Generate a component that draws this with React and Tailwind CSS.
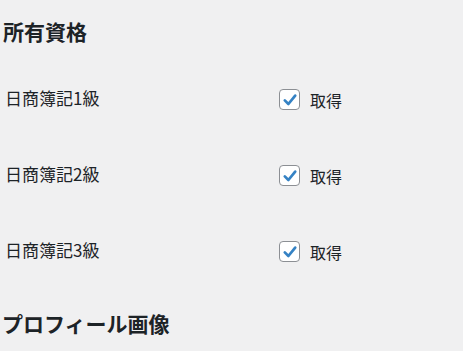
import React from "react";

const font = { fontFamily: '"Noto Sans CJK JP", "Noto Sans", sans-serif' };

function Check() {
  return (
    <span className="flex h-[21px] w-[21px] items-center justify-center rounded-[4px] border border-[#8c8f94] bg-white">
      <svg width="16" height="16" viewBox="0 0 20 20">
        <path d="M3.5 10.5 L8 15 L16.5 4.5" fill="none" stroke="#3582c4" strokeWidth="3.4" strokeLinecap="round" strokeLinejoin="round" />
      </svg>
    </span>
  );
}

function Row({ label }) {
  return (
    <div className="flex h-[76px] items-center">
      <div className="w-[279px] pl-[5px] text-[17px] text-[#1d2327]">{label}</div>
      <div className="flex items-center gap-[10px] pt-[3px]">
        <Check />
        <span className="text-[16px] text-[#1d2327]">取得</span>
      </div>
    </div>
  );
}

export default function App() {
  return (
    <div className="h-[351px] w-[463px] overflow-hidden bg-[#f0f0f1]" style={font}>
      <h2 className="pl-[3px] pt-[16px] text-[21px] font-bold leading-[30px] text-[#1d2327]">所有資格</h2>
      <div className="mt-[14px]">
        <Row label="日商簿記1級" />
        <Row label="日商簿記2級" />
        <Row label="日商簿記3級" />
      </div>
      <h2 className="mt-[20px] pl-[2px] text-[21px] font-bold leading-[30px] text-[#1d2327]">プロフィール画像</h2>
    </div>
  );
}
